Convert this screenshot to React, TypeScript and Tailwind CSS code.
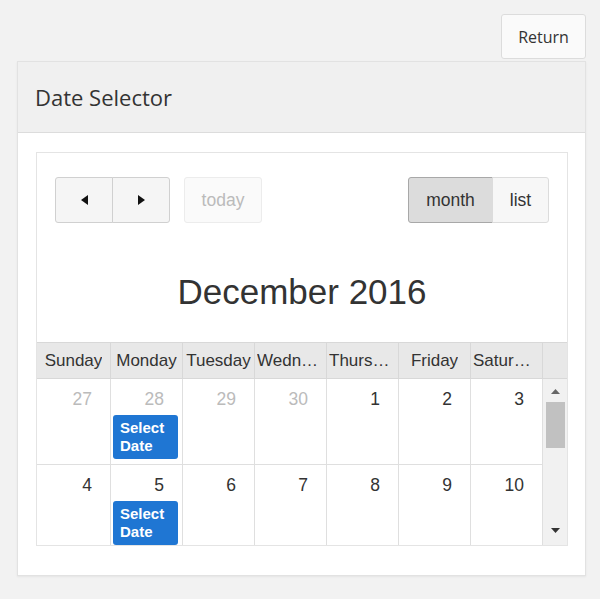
import React from 'react';

type Day = { n: number; muted?: boolean; select?: boolean };

const headers = ['Sunday', 'Monday', 'Tuesday', 'Wednesday', 'Thursday', 'Friday', 'Saturday'];

const weeks: Day[][] = [
    [
        { n: 27, muted: true },
        { n: 28, muted: true, select: true },
        { n: 29, muted: true },
        { n: 30, muted: true },
        { n: 1 },
        { n: 2 },
        { n: 3 },
    ],
    [{ n: 4 }, { n: 5, select: true }, { n: 6 }, { n: 7 }, { n: 8 }, { n: 9 }, { n: 10 }],
];

function Tri({ dir, className }: { dir: 'left' | 'right' | 'up' | 'down'; className?: string }) {
    const pts = {
        left: '7,0 7,10 0,5',
        right: '0,0 0,10 7,5',
        up: '0,5 9,5 4.5,0',
        down: '0,0 9,0 4.5,5',
    }[dir];
    const horiz = dir === 'left' || dir === 'right';
    return (
        <svg
            width={horiz ? 7 : 9}
            height={horiz ? 10 : 5}
            viewBox={horiz ? '0 0 7 10' : '0 0 9 5'}
            className={className}
        >
            <polygon points={pts} fill="currentColor" />
        </svg>
    );
}

export default function App() {
    return (
        <div className="min-h-[599px] bg-[#f2f2f2] pt-[14px] pl-[17px] pr-[14px] font-['Open_Sans',sans-serif]">
            <div className="flex justify-end">
                <button className="h-[45px] w-[85px] rounded-[3px] border border-[#dcdcdc] bg-[#fafafa] text-[16px] text-[#333]">
                    Return
                </button>
            </div>

            <div className="mt-[2px] border border-[#e2e2e2] bg-white shadow-[0_1px_2px_rgba(0,0,0,0.06)]">
                {/* Header */}
                <div className="flex h-[71px] items-center border-b border-[#dcdcdc] bg-[#f0f0f0] pl-[17px]">
                    <h1 className="text-[22px] text-[#333]">Date Selector</h1>
                </div>

                {/* Body */}
                <div className="pt-[19px] pl-[18px] pr-[17px] pb-[29px]">
                    <div className="border border-[#e4e4e4] font-['Liberation_Sans',Arial,sans-serif] text-[#333]">
                        {/* Toolbar */}
                        <div className="flex items-center justify-between px-[18px] pt-[24px]">
                            <div className="flex items-center">
                                <button className="flex h-[46px] w-[58px] items-center justify-center rounded-l-[3px] border border-[#d0d0d0] bg-[#f5f5f5] text-[#111]">
                                    <Tri dir="left" />
                                </button>
                                <button className="-ml-px flex h-[46px] w-[58px] items-center justify-center rounded-r-[3px] border border-[#d0d0d0] bg-[#f5f5f5] text-[#111]">
                                    <Tri dir="right" />
                                </button>
                                <button className="ml-[14px] h-[46px] w-[78px] rounded-[3px] border border-[#ececec] bg-[#fafafa] text-[17.5px] text-[#bbb]">
                                    today
                                </button>
                            </div>
                            <div className="flex items-center">
                                <button className="h-[46px] w-[85px] rounded-l-[3px] border border-[#a8a8a8] bg-[#dcdcdc] text-[17.5px] text-[#333]">
                                    month
                                </button>
                                <button className="-ml-px h-[46px] w-[57px] rounded-r-[3px] border border-[#dcdcdc] bg-[#f7f7f7] text-[17.5px] text-[#333]">
                                    list
                                </button>
                            </div>
                        </div>

                        {/* Title */}
                        <h2 className="mt-[49px] mb-[30px] text-center text-[35px] leading-[40px] text-[#333]">
                            December 2016
                        </h2>

                        {/* Day headers */}
                        <div className="flex h-[37px] border-y border-[#d8d8d8] bg-[#e8e8e8]">
                            {headers.map((h, i) => (
                                <div
                                    key={h}
                                    className={`${i === 0 ? 'w-[74px]' : 'w-[72px]'} flex min-w-0 items-center justify-center border-r border-[#d8d8d8] px-[2px] text-[17px]`}
                                >
                                    <span className="min-w-0 truncate">{h}</span>
                                </div>
                            ))}
                            <div className="flex-1" />
                        </div>

                        {/* Weeks */}
                        <div className="flex h-[166px] overflow-hidden">
                            <div>
                                {weeks.map((w, wi) => (
                                    <div key={wi} className="flex h-[86px] border-b border-[#dfdfdf]">
                                        {w.map((d, di) => (
                                            <div
                                                key={di}
                                                className={`${di === 0 ? 'w-[74px]' : 'w-[72px]'} border-r border-[#dfdfdf] pt-[11px]`}
                                            >
                                                <div
                                                    className={`pr-[18px] text-right text-[17.5px] leading-[19px] ${d.muted ? 'text-[#bbb]' : 'text-[#333]'}`}
                                                >
                                                    {d.n}
                                                </div>
                                                {d.select && (
                                                    <button className="mt-[6px] ml-[2px] h-[44px] w-[65px] rounded-[3px] bg-[#1f76d3] pl-[7px] text-left text-[15px] leading-[18px] font-bold text-white">
                                                        Select
                                                        <br />
                                                        Date
                                                    </button>
                                                )}
                                            </div>
                                        ))}
                                    </div>
                                ))}
                            </div>

                            {/* Scrollbar */}
                            <div className="flex flex-1 flex-col items-center bg-[#f1f1f1] pt-[10px] pb-[12px]">
                                <Tri dir="up" className="text-[#666]" />
                                <div className="mt-[8px] h-[46px] w-[19px] bg-[#c1c1c1]" />
                                <div className="flex-1" />
                                <Tri dir="down" className="text-[#333]" />
                            </div>
                        </div>
                    </div>
                </div>
            </div>
        </div>
    );
}
